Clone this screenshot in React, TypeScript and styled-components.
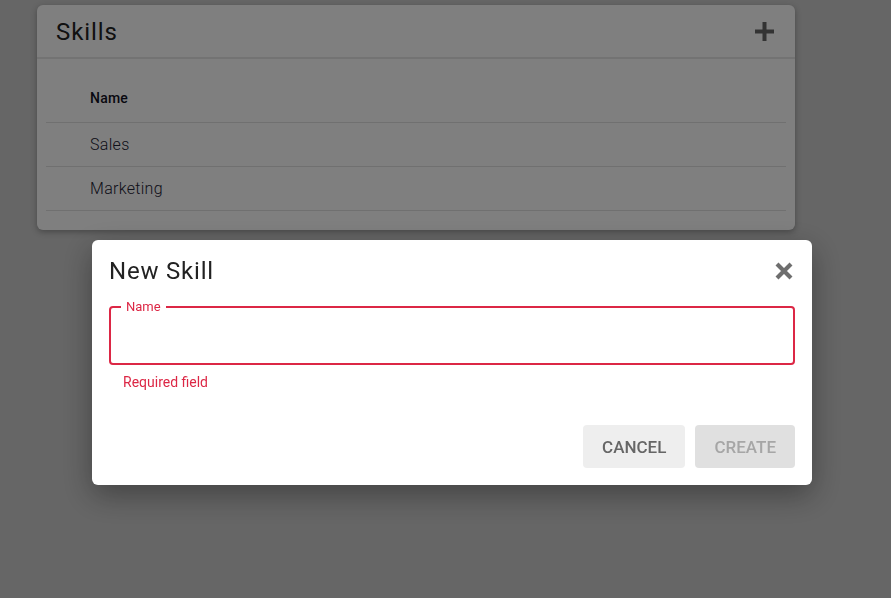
import React, { useState } from 'react';
import styled, { createGlobalStyle } from 'styled-components';

const GlobalStyle = createGlobalStyle`
    html, body {
        margin: 0;
        padding: 0;
        height: 100%;
        background: #cccccc;
        font-family: Roboto, 'Liberation Sans', Arial, sans-serif;
    }
    * {
        box-sizing: border-box;
    }
`;

// 页面
const Page = styled.div`
    padding: 5px 96px 0 37px;
    min-height: 598px;
`;

const Card = styled.section`
    width: 758px;
    background: #ffffff;
    border-radius: 6px;
    box-shadow: 0 2px 6px rgba(0, 0, 0, 0.3);
`;

const CardHeader = styled.header`
    display: flex;
    align-items: center;
    justify-content: space-between;
    height: 54px;
    padding: 0 20px 0 19px;
    border-bottom: 2px solid #e6e6e6;
`;

const CardTitle = styled.h2`
    margin: 0 0 -2px;
    font-size: 24px;
    font-weight: 400;
    color: #222222;
    letter-spacing: 0.9px;
`;

const IconButton = styled.button<{ $color: string }>`
    display: flex;
    align-items: center;
    justify-content: center;
    width: 22px;
    height: 22px;
    padding: 0;
    border: none;
    background: none;
    color: ${(p) => p.$color};
    cursor: pointer;
`;

const Table = styled.div`
    padding: 15px 9px 19px;
`;

const Row = styled.div<{ $head?: boolean }>`
    display: flex;
    align-items: center;
    height: ${(p) => (p.$head ? 49 : 44)}px;
    padding-left: 44px;
    border-bottom: 1px solid #e0e0e0;
    font-size: ${(p) => (p.$head ? 14 : 16)}px;
    font-weight: ${(p) => (p.$head ? 500 : 300)};
    letter-spacing: ${(p) => (p.$head ? 0.2 : 0.3)}px;
    color: ${(p) => (p.$head ? '#111122' : '#222233')};
`;

// 遮罩 + 弹窗
const Overlay = styled.div`
    position: fixed;
    inset: 0;
    background: rgba(0, 0, 0, 0.5);
    padding: 240px 0 0 92px;
`;

const Dialog = styled.div`
    width: 720px;
    background: #ffffff;
    border-radius: 6px;
    padding: 0 17px 17px;
    box-shadow: 0 10px 30px rgba(0, 0, 0, 0.35);
`;

const DialogHeader = styled.div`
    display: flex;
    align-items: center;
    justify-content: space-between;
    height: 60px;
    padding: 2px 0 0;
`;

const DialogTitle = styled.h3`
    margin: 0;
    font-size: 24px;
    font-weight: 400;
    color: #222222;
    letter-spacing: 0.8px;
`;

const Field = styled.fieldset`
    margin: 0;
    height: 65px;
    padding: 0 10px;
    border: 2px solid #dc2745;
    border-radius: 4px;
`;

const Legend = styled.legend`
    padding: 0 5px;
    font-size: 13px;
    color: #dc2745;
    line-height: 14px;
`;

const Input = styled.input`
    width: 100%;
    height: 44px;
    border: none;
    outline: none;
    font-size: 16px;
    font-family: inherit;
    background: transparent;
`;

const Helper = styled.div`
    margin: 9px 0 0 14px;
    font-size: 14px;
    color: #dc2745;
`;

const Actions = styled.div`
    display: flex;
    justify-content: flex-end;
    gap: 10px;
    margin-top: 35px;
`;

const Button = styled.button<{ $disabled?: boolean }>`
    height: 43px;
    padding: 0 19px;
    border: none;
    border-radius: 4px;
    font-family: inherit;
    font-size: 17px;
    font-weight: 500;
    text-transform: uppercase;
    background: ${(p) => (p.$disabled ? '#e0e0e0' : '#eeeeee')};
    color: ${(p) => (p.$disabled ? '#a6a6a6' : '#666666')};
    cursor: ${(p) => (p.$disabled ? 'default' : 'pointer')};
`;

const skills = ['Sales', 'Marketing'];

const App = () => {
    const [name, setName] = useState('');

    return (
        <>
            <GlobalStyle />
            <Page>
                <Card>
                    <CardHeader>
                        <CardTitle>Skills</CardTitle>
                        <IconButton $color="#666666" aria-label="add">
                            <svg width="19" height="19" viewBox="0 0 19 19">
                                <path d="M7.5 0h4v7.5H19v4h-7.5V19h-4v-7.5H0v-4h7.5z" fill="currentColor" />
                            </svg>
                        </IconButton>
                    </CardHeader>
                    <Table>
                        <Row $head>Name</Row>
                        {skills.map((s) => (
                            <Row key={s}>{s}</Row>
                        ))}
                    </Table>
                </Card>
            </Page>
            <Overlay>
                <Dialog>
                    <DialogHeader>
                        <DialogTitle>New Skill</DialogTitle>
                        <IconButton $color="#6e6e6e" aria-label="close">
                            <svg width="20" height="20" viewBox="0 0 20 20">
                                <path
                                    d="M3 3l14 14M17 3L3 17"
                                    stroke="currentColor"
                                    strokeWidth="4.2"
                                    strokeLinecap="butt"
                                />
                            </svg>
                        </IconButton>
                    </DialogHeader>
                    <Field>
                        <Legend>Name</Legend>
                        <Input value={name} onChange={(e) => setName(e.target.value)} />
                    </Field>
                    <Helper>Required field</Helper>
                    <Actions>
                        <Button>Cancel</Button>
                        <Button $disabled>Create</Button>
                    </Actions>
                </Dialog>
            </Overlay>
        </>
    );
};

export default App;
